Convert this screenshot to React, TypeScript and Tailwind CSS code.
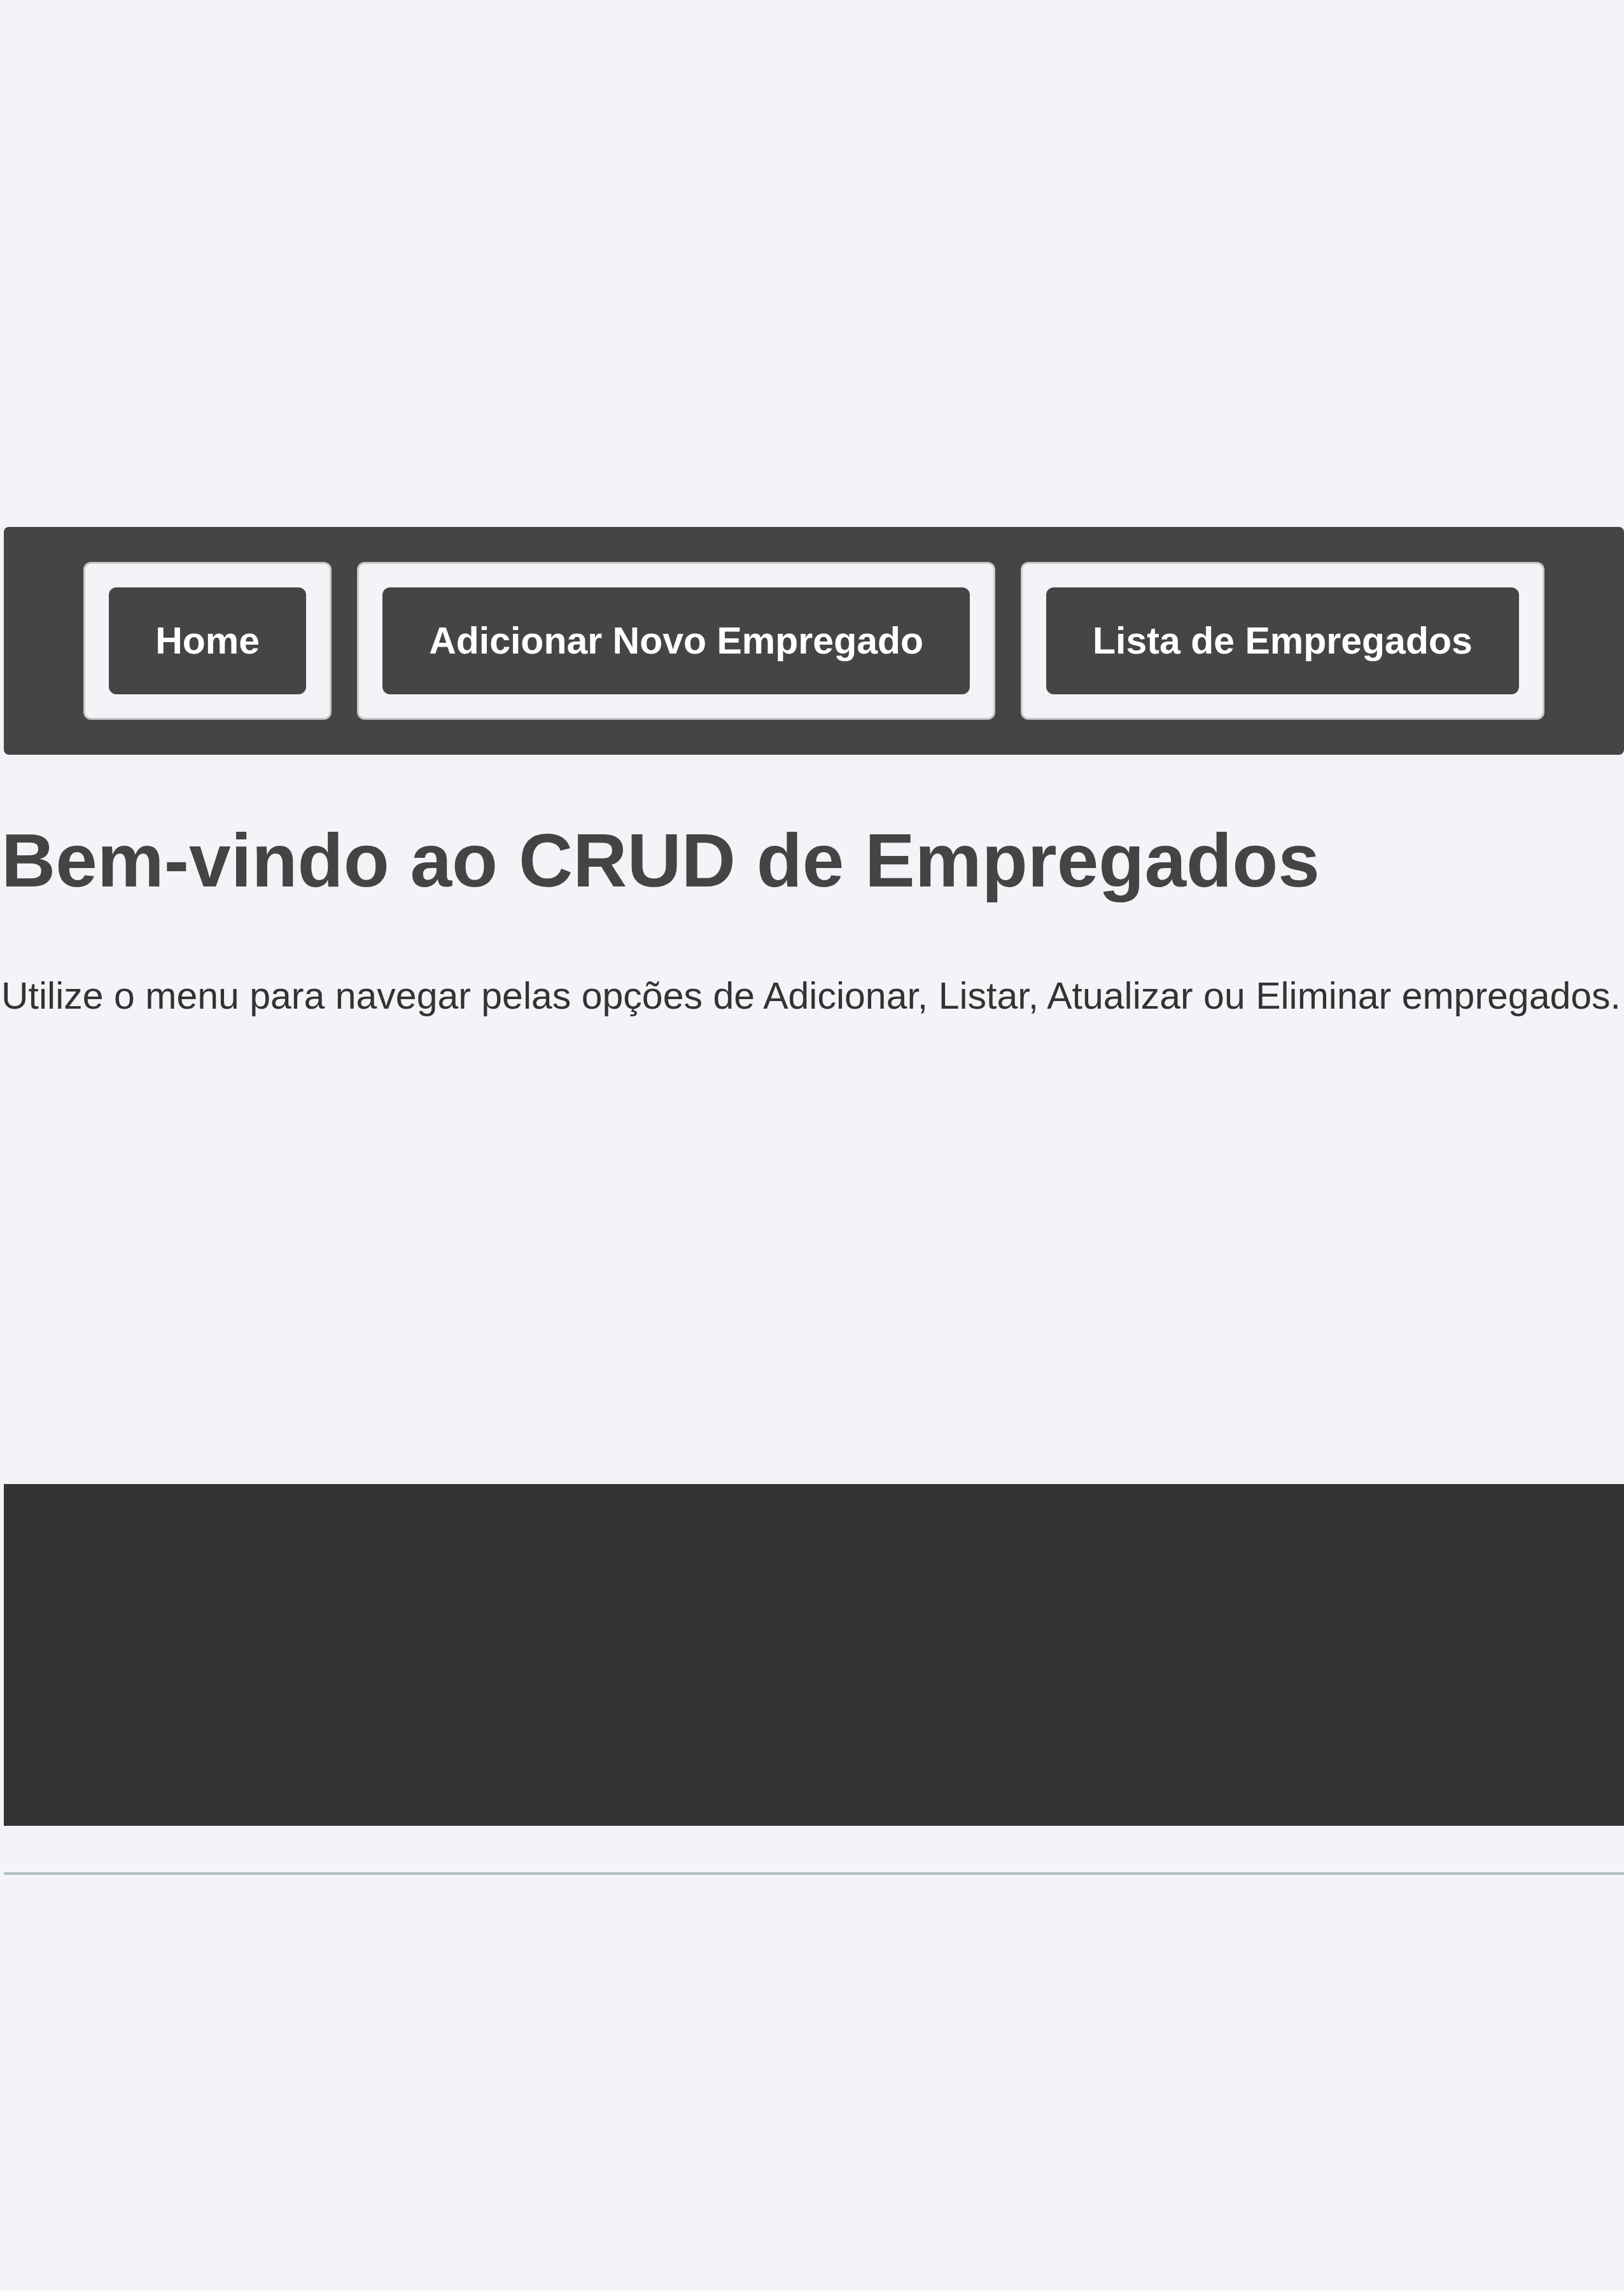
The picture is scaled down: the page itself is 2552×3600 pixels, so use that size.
import React from "react";

//itens do menu
const menuItems = ["Home", "Adicionar Novo Empregado", "Lista de Empregados"];

const NavBar = () => {
  return (
    <nav className="ml-[6px] flex justify-center gap-[40px] rounded-[8px] bg-[#454545] py-[55px]">
      {menuItems.map((label) => (
        <div
          key={label}
          className="rounded-[12px] border-[3px] border-[#c9c9c9] bg-[#f4f4f8] p-[37px]"
        >
          <a
            href="#"
            className="flex h-[168px] items-center rounded-[12px] bg-[#454545] px-[73px] text-[59px] font-bold whitespace-nowrap text-white"
          >
            {label}
          </a>
        </div>
      ))}
    </nav>
  );
};

const App = () => {
  return (
    <div className="min-h-screen bg-[#f4f4f8] pt-[828px] font-['Liberation_Sans',Arial,sans-serif]">
      <NavBar />

      <main className="pl-[2px]">
        <h1 className="mt-[98px] text-[118px] leading-[normal] font-bold whitespace-nowrap text-[#444444]">
          Bem-vindo ao CRUD de Empregados
        </h1>
        <p className="mt-[111px] text-[59px] leading-[normal] whitespace-nowrap text-[#333333]">
          Utilize o menu para navegar pelas opções de Adicionar, Listar,
          Atualizar ou Eliminar empregados.
        </p>
      </main>

      {/* rodape */}
      <footer className="mt-[733px] ml-[6px] h-[537px] bg-[#333333]" />
      <hr className="mt-[73px] ml-[6px] border-0 border-t-4 border-[#adc1c6]" />
    </div>
  );
};

export default App;
